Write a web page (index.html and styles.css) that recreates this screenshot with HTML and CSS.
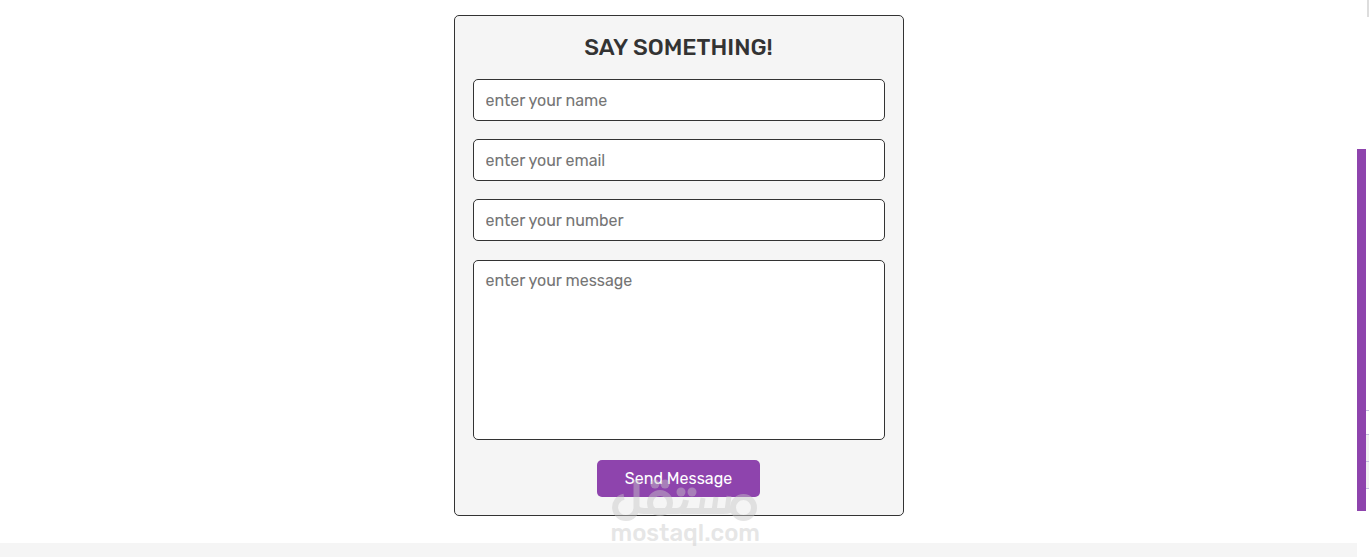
FILE: index.html
```
<!DOCTYPE html>
<html lang="en">
<head>
    <meta charset="UTF-8">
    <meta name="viewport" content="width=device-width, initial-scale=1.0">
    <title>Contact</title>
    <link rel="stylesheet" href="styles.css">
</head>
<body>
    <div class="page">
        <main>
            <section class="contact" id="contact">
                <form action="#">
                    <h3>say something!</h3>
                    <input type="text" placeholder="enter your name" aria-label="name" class="box">
                    <input type="email" placeholder="enter your email" aria-label="email" class="box">
                    <input type="tel" placeholder="enter your number" aria-label="number" class="box">
                    <textarea placeholder="enter your message" aria-label="message" class="box"></textarea>
                    <button type="submit" class="btn">Send Message</button>

                    <div class="watermark">
                        <svg viewBox="0 0 146 44" aria-hidden="true">
                            <g fill="none" stroke="currentColor" stroke-width="6" stroke-linejoin="round">
                                <path d="M13 18.8 A10.7 10.7 0 1 0 25.5 29.5 V2"/>
                                <path d="M25.5 29.5 Q27 33 33 33 H66 Q73 33 75 22 M70 33 H112 Q120 33 123 29"/>
                                <path d="M90 33 L92 20 M103 33 L105 19 M116 33 L118 18" stroke-width="5"/>
                                <circle cx="49" cy="25" r="10"/>
                                <circle cx="132.5" cy="29.5" r="10.5"/>
                            </g>
                            <g fill="currentColor">
                                <circle cx="44" cy="6" r="4.5"/>
                                <circle cx="54" cy="6" r="4.5"/>
                                <circle cx="70" cy="14" r="4.5"/>
                                <circle cx="81" cy="14" r="4.5"/>
                            </g>
                        </svg>
                        <span>mostaql.com</span>
                    </div>
                </form>
            </section>
            <section class="footer"></section>
        </main>

        <div class="scrollbar">
            <div class="thumb"></div>
            <div class="edge">
                <b></b>
                <i></i>
                <i class="fill"></i>
                <i class="fill"></i>
                <i></i>
            </div>
        </div>
    </div>
</body>
</html>
```

FILE: styles.css
```
* {
    margin: 0;
    padding: 0;
    box-sizing: border-box;
    font-family: Rubik, Roboto, sans-serif;
}

body {
    background: #fff;
    overflow: hidden;
}

.page {
    display: flex;
    height: 100vh;
}

main {
    flex: 1;
    display: flex;
    flex-direction: column;
}

.contact {
    padding: 15px 20px 27px;
}

.contact form {
    position: relative;
    max-width: 450px;
    margin: 0 auto;
    padding: 18px;
    border: 1px solid #333;
    border-radius: 5px;
    background: #f5f5f5;
    text-align: center;
}

.contact h3 {
    margin-bottom: 18px;
    font-size: 23px;
    font-weight: 500;
    line-height: 27px;
    text-transform: uppercase;
    color: #333;
}

.box {
    display: block;
    width: 100%;
    height: 42px;
    margin-bottom: 18px;
    padding: 10px 12px;
    border: 1px solid #333;
    border-radius: 5px;
    background: #fff;
    font-size: 16px;
    color: #333;
    resize: none;
}

.box::placeholder {
    color: #757575;
}

textarea.box {
    height: 180px;
    margin: 19px 0 20px;
}

.btn {
    padding: 8px 28px;
    border: none;
    border-radius: 5px;
    background: #8e44ad;
    font-size: 16px;
    line-height: 21px;
    color: #fff;
    cursor: pointer;
    vertical-align: top;
}

.footer {
    flex: 1;
    background: #f5f5f5;
}

/* watermark lies over the form's bottom edge */
.watermark {
    position: absolute;
    left: 50%;
    top: 462px;
    width: 146px;
    margin-left: -68px;
    color: #c8c8c8;
    opacity: 0.45;
    pointer-events: none;
}

.watermark svg {
    display: block;
    width: 146px;
    height: 44px;
}

.watermark span {
    display: block;
    font-size: 24px;
    font-weight: 500;
    line-height: 22px;
}

.scrollbar {
    display: flex;
    width: 12px;
}

.thumb {
    width: 9px;
    height: 65vh;
    margin-top: 149px;
    background: #8e44ad;
}

.edge {
    flex: 1;
}

.edge b {
    display: block;
    width: 2px;
    height: 17px;
    margin: 0 0 393px auto;
    background: #ddd;
}

.edge i {
    display: block;
    height: 24px;
    border-top: 1px solid #c5bfe0;
}

.edge .fill {
    height: 27px;
    background: #f2f2f2;
}
```
